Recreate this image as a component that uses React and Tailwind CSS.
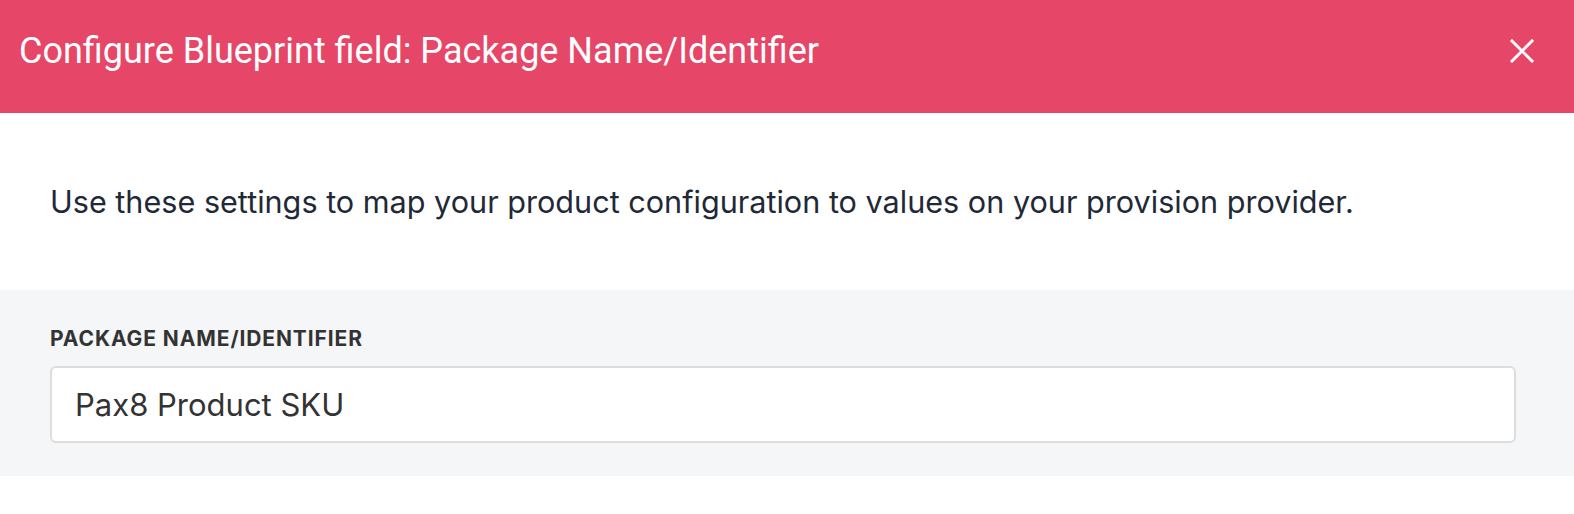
import React from 'react';

const App = () => {
    return (
        <div className="w-[1574px] h-[514px] bg-white flex flex-col">
            <div className="h-[113px] shrink-0 bg-[#e64667] flex items-center justify-between pl-[19px] pr-[40px] pb-[12px]">
                <h1 className="text-white text-[36px] font-['Roboto',sans-serif] leading-none">
                    Configure Blueprint field: Package Name/Identifier
                </h1>
                <button type="button" className="text-white">
                    <svg width="24" height="24" viewBox="0 0 24 24" fill="none" stroke="currentColor" strokeWidth="3" strokeLinecap="square">
                        <path d="M2 2 L22 22 M22 2 L2 22" />
                    </svg>
                </button>
            </div>

            <div className="h-[177px] shrink-0 flex items-center px-[50px]">
                <p className="text-[30.6px] text-[#1f2937] font-['Inter',sans-serif] leading-none mt-[2px]">
                    Use these settings to map your product configuration to values on your provision provider.
                </p>
            </div>

            <div className="bg-[#f5f6f8] h-[186px] shrink-0 pt-[38px] px-[50px]">
                <label className="block text-[21px] font-bold uppercase tracking-[0.9px] text-[#333] font-['Inter',sans-serif] leading-none mb-[17px]">
                    Package Name/Identifier
                </label>
                <input
                    type="text"
                    defaultValue="Pax8 Product SKU"
                    className="block w-[1466px] h-[77px] bg-white border-2 border-[#dddddd] rounded-[6px] px-[23px] text-[31px] text-[#333] font-['Inter',sans-serif] outline-none"
                />
            </div>
        </div>
    );
};

export default App;
